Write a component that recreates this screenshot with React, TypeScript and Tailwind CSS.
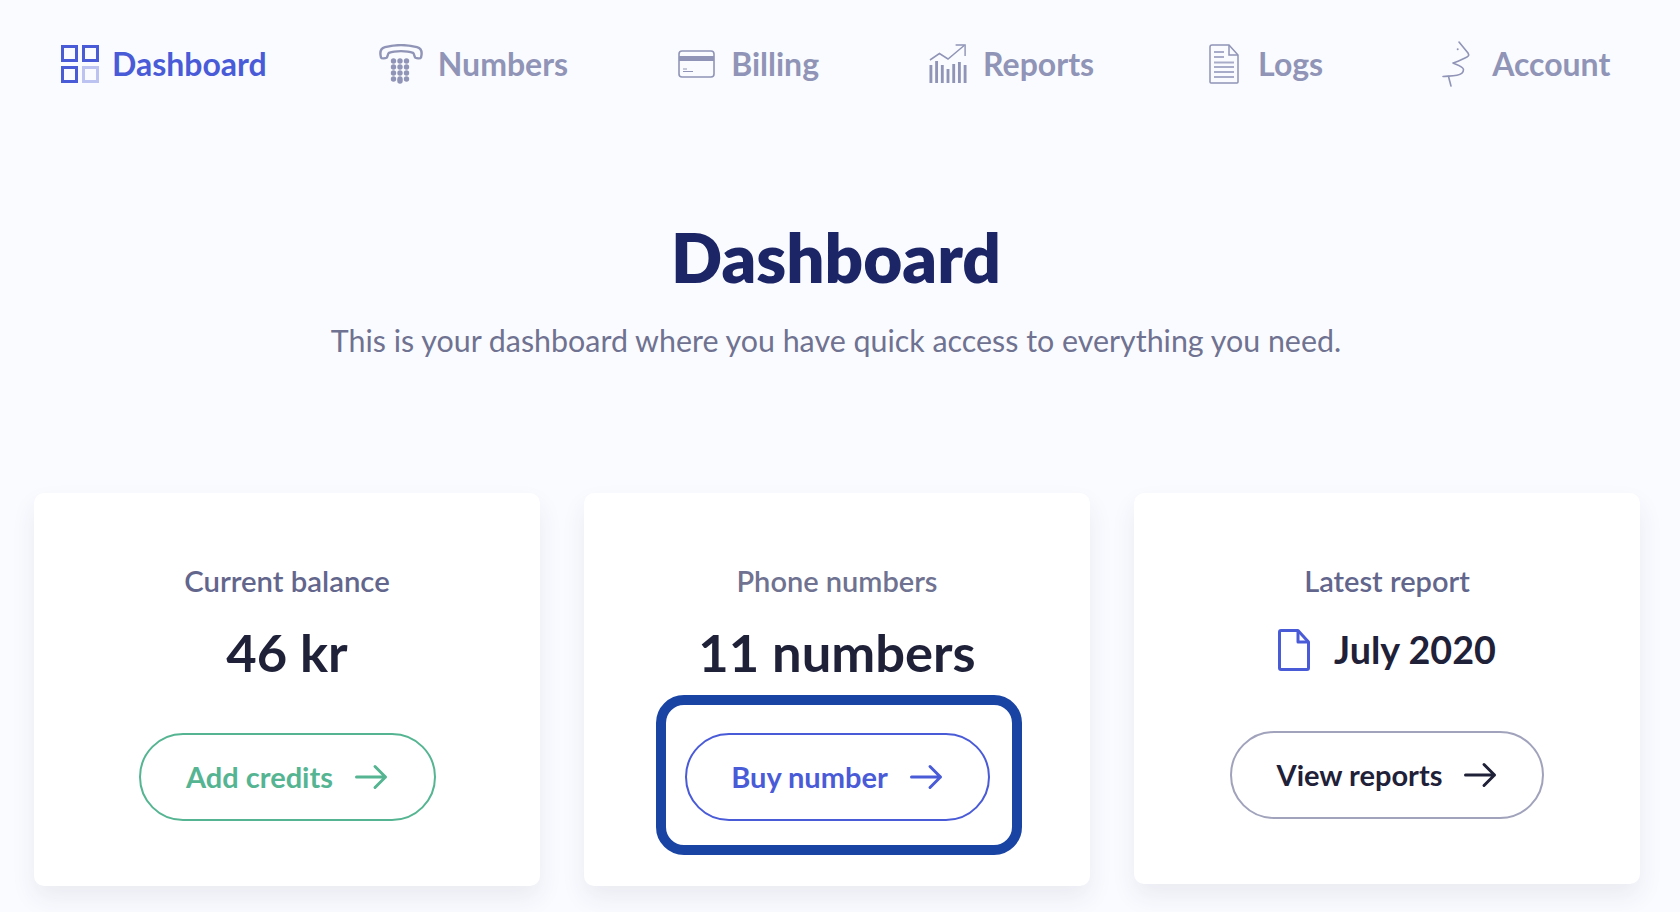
import React from "react";

const DashIcon = () => (
  <svg width="38" height="38" viewBox="0 0 38 38" fill="none" strokeWidth="3" className="shrink-0">
    <rect x="1.5" y="1.5" width="14" height="14" stroke="#4a5bd8" />
    <rect x="22.5" y="1.5" width="14" height="14" stroke="#4a5bd8" />
    <rect x="1.5" y="22.5" width="14" height="14" stroke="#4a5bd8" />
    <rect x="22.5" y="22.5" width="14" height="14" stroke="#bcc3f0" />
  </svg>
);

const PhoneIcon = () => {
  const dots: [number, number][] = [];
  for (let r = 0; r < 4; r++) for (let c = 0; c < 3; c++) dots.push([14.5 + c * 6.5, 17 + r * 6]);
  return (
    <svg width="44" height="40" viewBox="0 0 44 40" fill="none" className="shrink-0">
      <path d="M2 13.5C0.5 8 1.5 4.5 6 3.2C16 0.6 28 0.6 38 3.2C42.5 4.5 43.5 8 42 13.5C41.5 14.6 38 14.6 36.5 13.8C35 12.8 35.5 9.8 34 8.8C28 6.6 16 6.6 10 8.8C8.5 9.8 9 12.8 7.5 13.8C6 14.6 2.5 14.6 2 13.5Z" stroke="#9094b6" strokeWidth="2.4" strokeLinejoin="round" />
      {dots.map(([x, y], i) => (
        <circle key={i} cx={x} cy={y} r="2.7" fill="#9094b6" />
      ))}
      <circle cx="21" cy="37" r="2.7" fill="#9094b6" />
    </svg>
  );
};

const CardIcon = () => (
  <svg width="37" height="28" viewBox="0 0 37 28" fill="none" className="shrink-0">
    <rect x="1" y="1" width="35" height="26" rx="3" stroke="#9094b6" strokeWidth="1.6" />
    <rect x="1" y="6" width="35" height="5" fill="#9094b6" />
    <path d="M5 19H9M5 21.5H15" stroke="#9094b6" strokeWidth="1" />
  </svg>
);

const ReportIcon = () => (
  <svg width="38" height="40" viewBox="0 0 40 40" preserveAspectRatio="none" fill="none" className="shrink-0">
    <path d="M1 16L11 9.5L20 15L37 1.5" stroke="#9094b6" strokeWidth="1.5" />
    <path d="M28 1H38V12" stroke="#9094b6" strokeWidth="1.5" />
    <path d="M2 21V39M8 17V39M14 21V39M20 25V39M26 20V39M32 18V39M38 21V39" stroke="#9094b6" strokeWidth="3" />
  </svg>
);

const LogIcon = () => (
  <svg width="30" height="40" viewBox="0 0 30 40" fill="none" className="shrink-0">
    <path d="M3 1H20L29 11V38C29 38.6 28.6 39 28 39H2C1.4 39 1 38.6 1 38V3C1 1.8 1.8 1 3 1Z" stroke="#9094b6" strokeWidth="1.5" />
    <path d="M20 1V11H29" stroke="#9094b6" strokeWidth="1.5" />
    <path d="M5 8H15M5 13H15M5 18.5H25M5 23H25M5 28H25M5 33H25" stroke="#a9acc8" strokeWidth="2" />
  </svg>
);

const FaceIcon = () => (
  <svg width="30" height="48" viewBox="0 0 30 48" fill="none" className="shrink-0">
    <path d="M17 2L26 13C27.5 15.5 26.5 16.5 23 18C19 20 15 22 11 23C14 24.5 21 26 21.5 29.5C21.5 32.5 19 34.5 15 35.2C10 36 6 36 1 36.5" stroke="#9094b6" strokeWidth="1.6" strokeLinecap="round" strokeLinejoin="round" />
    <path d="M6.5 36.5L9 46" stroke="#9094b6" strokeWidth="1.6" strokeLinecap="round" />
    <circle cx="15.7" cy="9.3" r="1" fill="#9094b6" />
  </svg>
);

const DocIcon = () => (
  <svg width="32" height="42" viewBox="0 0 32 42" fill="none" className="shrink-0">
    <path d="M3 1.5H20L30.5 13V39C30.5 40 29.8 40.5 29 40.5H3C2 40.5 1.5 40 1.5 39V3C1.5 2 2 1.5 3 1.5Z" stroke="#4a5bd8" strokeWidth="3" strokeLinejoin="round" />
    <path d="M20 1.5V13H30.5" stroke="#4a5bd8" strokeWidth="3" strokeLinejoin="round" />
  </svg>
);

const Arrow = ({ color }: { color: string }) => (
  <svg width="33" height="26" viewBox="0 0 33 26" fill="none" className="shrink-0">
    <path d="M1.5 13H30.5M20 2.5L30.5 13L20 23.5" stroke={color} strokeWidth="3" strokeLinecap="round" strokeLinejoin="round" />
  </svg>
);

const navItems = [
  { label: "Dashboard", icon: <DashIcon />, active: true, cls: "gap-[13px]" },
  { label: "Numbers", icon: <PhoneIcon />, cls: "ml-[112px] gap-[15px]" },
  { label: "Billing", icon: <CardIcon />, cls: "ml-[110px] gap-[16px]" },
  { label: "Reports", icon: <ReportIcon />, cls: "ml-[110px] gap-[16px]" },
  { label: "Logs", icon: <LogIcon />, cls: "ml-[115px] gap-[19px]" },
  { label: "Account", icon: <FaceIcon />, cls: "ml-[119px] gap-[20px]" },
];

export default function App() {
  return (
    <div className="h-[912px] overflow-hidden bg-[#fafbff] font-['Lato',sans-serif]">
      <nav className="flex h-[128px] items-center pl-[61px]">
        {navItems.map((n) => (
          <a key={n.label} className={`flex shrink-0 items-center ${n.cls} text-[32px] font-bold ${n.active ? "text-[#4a5bd8]" : "text-[#9094b6]"}`}>
            {n.icon}
            <span>{n.label}</span>
          </a>
        ))}
      </nav>

      <header className="mt-[83px] pr-[8px] text-center">
        <h1 className="text-[67.3px] font-extrabold leading-[92px] text-[#1c2566]">Dashboard</h1>
        <p className="mt-[16px] text-[30.4px] leading-[43px] text-[#6f7290]">
          This is your dashboard where you have quick access to everything you need.
        </p>
      </header>

      <section className="mt-[131px] grid grid-cols-3 items-start gap-[44px] pl-[34px] pr-[40px]">
        <div className="flex h-[393px] flex-col items-center rounded-[10px] bg-white pt-[68px] shadow-[0_12px_24px_rgba(40,50,90,0.08)]">
          <div className="text-[29.3px] font-semibold leading-[40px] text-[#63668c]">Current balance</div>
          <div className="mt-[17px] text-[52.5px] font-bold leading-[68px] text-[#1f2139]">46 kr</div>
          <a className="mt-[47px] flex h-[88px] w-[297px] items-center justify-center gap-[22px] rounded-full border-2 border-[#55b592] bg-white text-[29px] font-bold text-[#55b592]">
            Add credits <Arrow color="#55b592" />
          </a>
        </div>

        <div className="flex h-[393px] flex-col items-center rounded-[10px] bg-white pt-[68px] shadow-[0_12px_24px_rgba(40,50,90,0.08)]">
          <div className="text-[29px] font-semibold leading-[40px] text-[#6f7290]">Phone numbers</div>
          <div className="mt-[17px] text-[52.5px] font-bold leading-[68px] text-[#1f2139]">11 numbers</div>
          <a className="relative mt-[47px] flex h-[88px] w-[305px] items-center justify-center gap-[22px] rounded-full border-2 border-[#4a5bd8] bg-white text-[29px] font-bold text-[#4a5bd8]">
            Buy number <Arrow color="#4a5bd8" />
            <span className="absolute -bottom-[36px] -left-[31px] -right-[34px] -top-[40px] rounded-[28px] border-[10px] border-[#1a44a4]" />
          </a>
        </div>

        <div className="flex h-[391px] flex-col items-center rounded-[10px] bg-white pt-[68px] shadow-[0_12px_24px_rgba(40,50,90,0.08)]">
          <div className="text-[29px] font-semibold leading-[40px] text-[#63668c]">Latest report</div>
          <div className="mt-[21px] flex h-[56px] items-center gap-[24px] text-[37.7px] font-bold text-[#1f2139]">
            <DocIcon />
            <span>July 2020</span>
          </div>
          <a className="mt-[53px] flex h-[88px] w-[314px] items-center justify-center gap-[22px] rounded-full border-2 border-[#a0a3bb] bg-white text-[29px] font-bold text-[#1f2139]">
            View reports <Arrow color="#1f2139" />
          </a>
        </div>
      </section>
    </div>
  );
}
